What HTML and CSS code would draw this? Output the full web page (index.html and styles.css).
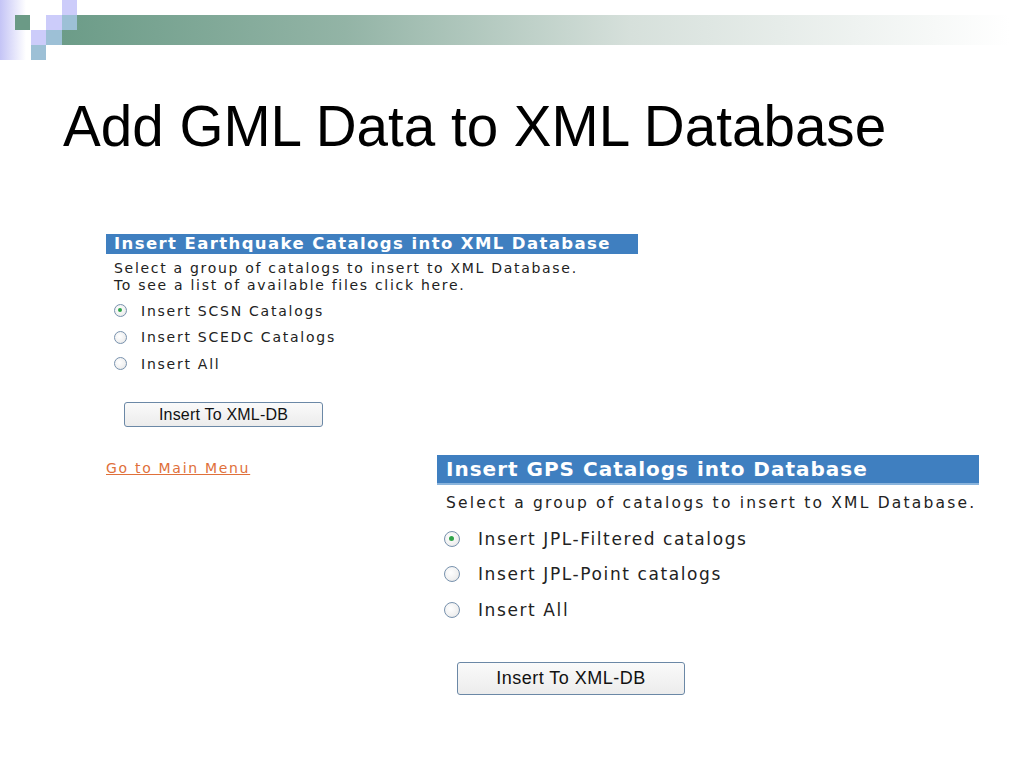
FILE: index.html
```html
<!DOCTYPE html>
<html lang="en">
<head>
    <meta charset="UTF-8">
    <title>Add GML Data to XML Database</title>
    <link rel="stylesheet" href="styles.css">
</head>
<body>
    <div class="slide">
        <svg class="deco" width="1024" height="60" viewBox="0 0 1024 60">
            <defs>
                <linearGradient id="strip" x1="0" x2="1" y1="0" y2="0">
                    <stop offset="0" stop-color="#c4c4f6"/>
                    <stop offset="1" stop-color="#ffffff"/>
                </linearGradient>
                <linearGradient id="bar" x1="62" x2="1010" y1="0" y2="0" gradientUnits="userSpaceOnUse">
                    <stop offset="0" stop-color="#6c9c88"/>
                    <stop offset="0.3" stop-color="#93b4a6"/>
                    <stop offset="0.6" stop-color="#d6e0db"/>
                    <stop offset="1" stop-color="#ffffff"/>
                </linearGradient>
            </defs>
            <rect x="0" y="0" width="26" height="60" fill="url(#strip)"/>
            <rect x="62" y="15" width="948" height="30" fill="url(#bar)"/>
            <rect x="15" y="15" width="15" height="15" fill="#6b9a86"/>
            <rect x="62" y="0" width="15" height="15" fill="#ccccfa"/>
            <rect x="46" y="15" width="16" height="15" fill="#ccccfa"/>
            <rect x="62" y="15" width="15" height="15" fill="#9dc0d6"/>
            <rect x="31" y="30" width="15" height="15" fill="#ccccfa"/>
            <rect x="46" y="30" width="16" height="15" fill="#9dc0d6"/>
            <rect x="31" y="45" width="15" height="15" fill="#9dc0d6"/>
        </svg>

        <h1 class="title">Add GML Data to XML Database</h1>

        <div class="content">
            <form class="panel panel-small">
                <div class="panel-head">Insert Earthquake Catalogs into XML Database</div>
                <p class="panel-text">Select a group of catalogs to insert to XML Database.<br>To see a list of available files click here.</p>
                <label class="option"><span class="radio checked"></span>Insert SCSN Catalogs</label>
                <label class="option"><span class="radio"></span>Insert SCEDC Catalogs</label>
                <label class="option"><span class="radio"></span>Insert All</label>
                <button type="button" class="btn">Insert To XML-DB</button>
            </form>

            <div class="lower">
                <a class="menu-link" href="#">Go to Main Menu</a>
                <form class="panel panel-large">
                    <div class="panel-head">Insert GPS Catalogs into Database</div>
                    <p class="panel-text">Select a group of catalogs to insert to XML Database.</p>
                    <label class="option"><span class="radio checked"></span>Insert JPL-Filtered catalogs</label>
                    <label class="option"><span class="radio"></span>Insert JPL-Point catalogs</label>
                    <label class="option"><span class="radio"></span>Insert All</label>
                    <button type="button" class="btn">Insert To XML-DB</button>
                </form>
            </div>
        </div>
    </div>
</body>
</html>
```

FILE: styles.css
```css
body {
    margin: 0;
    background-color: #fff;
    font-family: "DejaVu Sans", Verdana, sans-serif;
}

.slide {
    width: 1024px;
    height: 768px;
    overflow: hidden;
}

.deco {
    display: block;
}

.title {
    margin: 39px 0 0 63px;
    font-family: "Liberation Sans", Arial, sans-serif;
    font-weight: normal;
    font-size: 56.6px;
    line-height: 1;
    color: #000;
}

.content {
    margin-top: 78px;
    padding-left: 106px;
}

.panel {
    display: flex;
    flex-direction: column;
    align-items: flex-start;
    margin: 0;
    color: #222;
}

.panel-small {
    width: 532px;
}

.panel-head {
    align-self: stretch;
    background-color: #3f7fc0;
    color: #fff;
    font-weight: bold;
}

.panel-small .panel-head {
    height: 20px;
    line-height: 20px;
    padding-left: 8px;
    font-size: 16.5px;
    letter-spacing: 1.4px;
}

.panel-text {
    margin: 0;
}

.panel-small .panel-text {
    padding: 6px 0 0 8px;
    font-size: 14px;
    line-height: 17px;
    letter-spacing: 1.7px;
}

.option {
    display: flex;
    align-items: center;
}

.panel-small .option {
    height: 26.5px;
    padding-left: 8px;
    font-size: 14px;
    letter-spacing: 1.75px;
}

.panel-small .option:first-of-type {
    margin-top: 4px;
}

.radio {
    flex: none;
    box-sizing: border-box;
    border-radius: 50%;
    border: 1.5px solid #7892ae;
    background: radial-gradient(circle at 40% 40%, #fff 0%, #f0f0f0 60%, #d8d8d8 100%);
    position: relative;
}

.radio.checked::after {
    content: "";
    position: absolute;
    border-radius: 50%;
    background-color: #2fa44a;
}

.panel-small .radio {
    width: 13px;
    height: 13px;
    margin-right: 14px;
}

.panel-small .radio.checked::after {
    left: 3px;
    top: 3px;
    width: 4px;
    height: 4px;
}

.btn {
    font-family: "Liberation Sans", Arial, sans-serif;
    color: #111;
    border: 1.5px solid #6b88a6;
    border-radius: 3px;
    background: linear-gradient(#fafafa, #ececec);
    padding: 0;
}

.panel-small .btn {
    width: 199px;
    height: 25px;
    margin: 25px 0 0 18px;
    font-size: 16px;
    letter-spacing: 0.2px;
}

.lower {
    display: flex;
    align-items: flex-start;
    margin-top: 28px;
}

.menu-link {
    width: 331px;
    margin-top: 5px;
    color: #e0703a;
    font-size: 14px;
    letter-spacing: 1.7px;
}

.panel-large {
    width: 542px;
}

.panel-large .panel-head {
    height: 28px;
    line-height: 29px;
    padding-left: 9px;
    border-bottom: 2px solid #8ab4dc;
    font-size: 20px;
    letter-spacing: 1px;
}

.panel-large .panel-text {
    padding: 8px 0 0 9px;
    font-size: 15.5px;
    line-height: 20px;
    letter-spacing: 2.2px;
}

.panel-large .option {
    height: 35.5px;
    padding-left: 7px;
    font-size: 17px;
    letter-spacing: 1.6px;
}

.panel-large .option:first-of-type {
    margin-top: 8px;
}

.panel-large .radio {
    width: 16px;
    height: 16px;
    margin-right: 18px;
}

.panel-large .radio.checked::after {
    left: 4px;
    top: 4px;
    width: 5px;
    height: 5px;
}

.panel-large .btn {
    width: 228px;
    height: 33px;
    margin: 34px 0 0 20px;
    font-size: 18px;
    letter-spacing: 0.5px;
}
```
